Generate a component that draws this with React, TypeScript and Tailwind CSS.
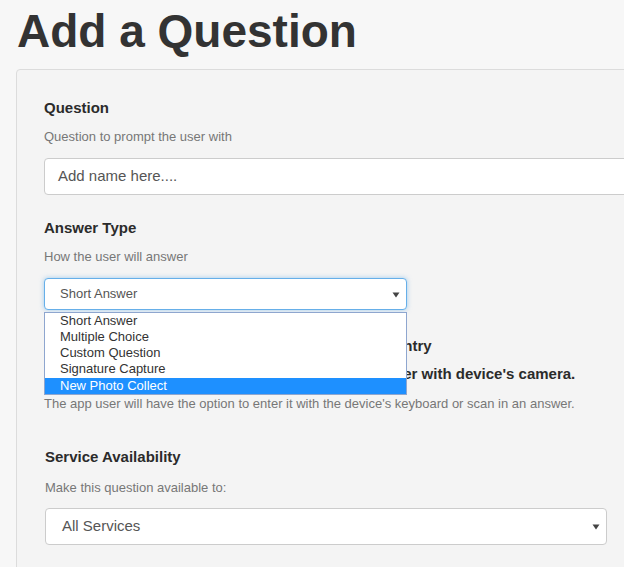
const answerTypes = [
  "Short Answer",
  "Multiple Choice",
  "Custom Question",
  "Signature Capture",
  "New Photo Collect",
]

function Caret() {
  return (
    <svg width="8" height="7" viewBox="0 0 8 7" className="shrink-0">
      <polygon points="0.5,1.5 7.5,1.5 4,6.5" fill="#444" />
    </svg>
  )
}

function Label({ children, className = "" }: { children: React.ReactNode; className?: string }) {
  return <div className={`text-[15px] leading-5 font-bold text-[#2b2b2b] ${className}`}>{children}</div>
}

function Hint({ children, className = "" }: { children: React.ReactNode; className?: string }) {
  return <div className={`text-[13px] leading-[18px] text-[#777] ${className}`}>{children}</div>
}

export default function App() {
  const highlighted = "New Photo Collect"

  return (
    <div className="h-[567px] w-full overflow-hidden bg-[#f7f7f7] font-['Liberation_Sans',Arial,sans-serif]">
      <div className="pl-4 pt-2">
        <h1 className="ml-px mb-[15px] text-[46px] leading-[46px] font-bold text-[#333]">Add a Question</h1>

        <div className="w-[680px] rounded-tl-[4px] border border-[#dcdcdc] bg-[#f4f4f4] pl-[27px] pt-[28px] pb-10">
          {/* Question */}
          <Label>Question</Label>
          <Hint className="mt-[10px]">Question to prompt the user with</Hint>
          <div className="mt-[12px] flex h-[37px] w-[620px] items-center rounded-[4px] border border-[#ccc] bg-white pl-[13px] text-[15px] text-[#555]">
            Add name here....
          </div>

          {/* Answer type */}
          <Label className="mt-[23px]">Answer Type</Label>
          <Hint className="mt-[10px]">How the user will answer</Hint>
          <div className="relative mt-[12px] w-[363px]">
            <div className="flex h-[32px] items-center justify-between rounded-[4px] border border-[#66afe9] bg-white pl-[15px] pr-[6px] text-[13px] text-[#555] shadow-[0_0_5px_rgba(102,175,233,0.6)]">
              <span>Short Answer</span>
              <Caret />
            </div>
            <ul className="absolute left-0 top-[calc(100%+1.5px)] z-10 w-full border border-[#8ea6cf] bg-white">
              {answerTypes.map((t) => (
                <li
                  key={t}
                  className={
                    t === highlighted
                      ? "h-[16.3px] bg-[#1e90ff] pl-[15px] text-[13px] leading-[16px] text-white"
                      : "h-[16.3px] pl-[15px] text-[13px] leading-[16px] text-[#333]"
                  }
                >
                  {t}
                </li>
              ))}
            </ul>
          </div>

          {/* Barcode entry (partly under the open list) */}
          <Label className="mt-[26px]">Allow Barcode / QR Code Scanning or Keyboard Entry</Label>
          <Label className="mt-[8px]">Allow the app user to scan a barcode or a QR reader with device's camera.</Label>
          <Hint className="mt-[11px]">
            The app user will have the option to enter it with the device's keyboard or scan in an answer.
          </Hint>

          {/* Service availability */}
          <div className="pl-px">
            <Label className="mt-[34px]">Service Availability</Label>
            <Hint className="mt-[12px]">Make this question available to:</Hint>
            <div className="mt-[11px] flex h-[37px] w-[562px] items-center justify-between rounded-[4px] border border-[#ccc] bg-white pl-[16px] pr-[6px] text-[15px] text-[#555]">
              <span>All Services</span>
              <Caret />
            </div>
          </div>
        </div>
      </div>
    </div>
  )
}
